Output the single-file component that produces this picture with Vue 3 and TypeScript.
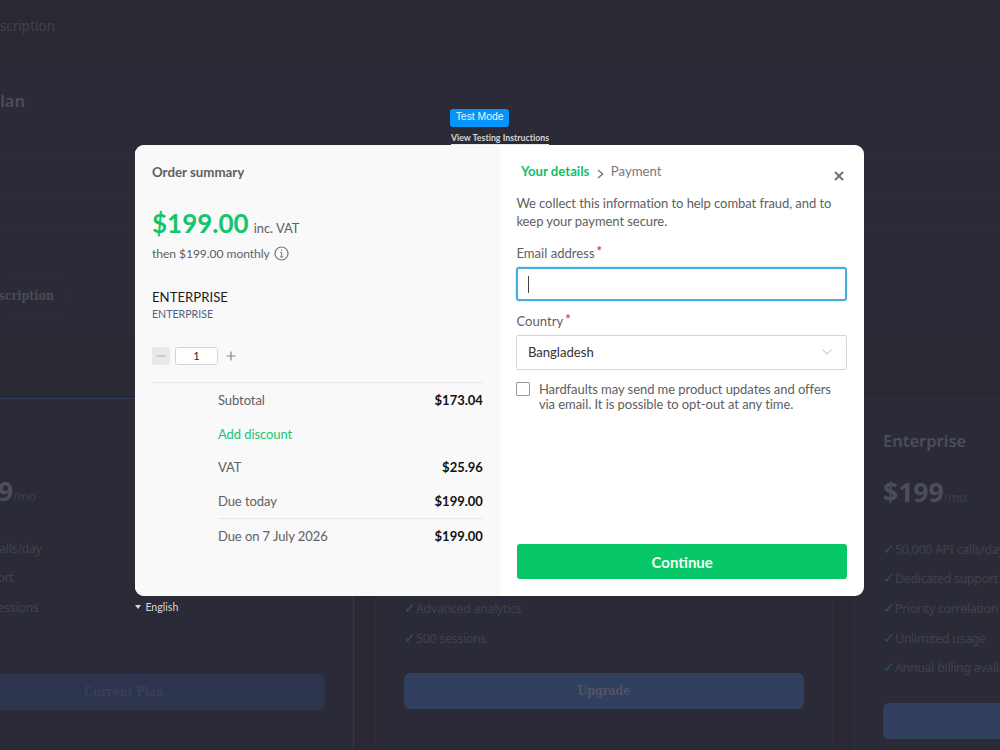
<template>
  <div class="screen">
    <div class="page" aria-hidden="true">
      <header class="topbar"><span class="crumb">Subscription</span></header>

      <section class="usage">
        <h2 class="usage-title">Your Plan</h2>
        <div class="usage-row"></div>
        <div class="usage-row"></div>
        <div class="usage-row"></div>
        <div class="manage">Subscription</div>
      </section>

      <section class="plans">
        <article v-for="plan in plans" :key="plan.id" class="plan" :class="plan.id">
          <h3 v-if="plan.name" class="plan-name">{{ plan.name }}</h3>
          <p v-if="plan.price" class="plan-price">{{ plan.price }}<small>/mo</small></p>
          <ul class="features">
            <li v-for="feature in plan.features" :key="feature"><i>✓</i><span>{{ feature }}</span></li>
          </ul>
          <div class="plan-button">{{ plan.action }}</div>
        </article>
      </section>
    </div>

    <div class="checkout">
      <div class="test-mode">
        <span class="badge">Test Mode</span>
        <a class="instructions">View Testing Instructions</a>
      </div>

      <div class="modal">
        <section class="summary">
          <h1>Order summary</h1>
          <div class="total"><strong>$199.00</strong><span>inc. VAT</span></div>
          <div class="recurring">
            then $199.00 monthly
            <svg width="15" height="15" viewBox="0 0 15 15" fill="none" stroke="#777" stroke-width="1.2">
              <circle cx="7.5" cy="7.5" r="6.5" />
              <path d="M6.3 6.4h1.4v4.4M6 10.9h3.2M7.5 3.7v1.3" stroke-width="1" />
            </svg>
          </div>
          <div class="product">ENTERPRISE</div>
          <div class="product-note">ENTERPRISE</div>
          <div class="quantity">
            <button class="step minus" :disabled="quantity <= 1" @click="quantity--">
              <svg width="10" height="10" viewBox="0 0 10 10"><path d="M0.5 5h9" /></svg>
            </button>
            <span class="count">{{ quantity }}</span>
            <button class="step plus" @click="quantity++">
              <svg width="10" height="10" viewBox="0 0 10 10"><path d="M0.5 5h9M5 0.5v9" /></svg>
            </button>
          </div>
          <div class="lines">
            <div v-for="line in lines" :key="line.label" class="line" :class="line.kind">
              <span>{{ line.label }}</span>
              <b v-if="line.amount">{{ line.amount }}</b>
            </div>
          </div>
        </section>

        <section class="details">
          <div class="steps">
            <span class="current">Your details</span>
            <svg class="next" width="7" height="10" viewBox="0 0 7 10"><path d="M1 1l4.7 4L1 9" /></svg>
            <span class="upcoming">Payment</span>
            <svg class="close" width="10" height="10" viewBox="0 0 10 10"><path d="M1 1l8 8M9 1L1 9" /></svg>
          </div>
          <p class="intro">We collect this information to help combat fraud, and to keep your payment secure.</p>
          <label class="label">Email address<sup>*</sup></label>
          <div class="email"><span class="caret"></span></div>
          <label class="label country-label">Country<sup>*</sup></label>
          <div class="select">
            <span>Bangladesh</span>
            <svg width="10" height="6" viewBox="0 0 10 6"><path d="M0.5 0.7L5 5L9.5 0.7" /></svg>
          </div>
          <div class="consent">
            <span class="box"></span>
            <p>Hardfaults may send me product updates and offers via email. It is possible to opt-out at any time.</p>
          </div>
          <button class="continue">Continue</button>
        </section>
      </div>

      <div class="language"><span class="triangle"></span>English</div>
    </div>
  </div>
</template>

<script setup lang="ts">
import { ref } from 'vue'

interface Plan {
  id: string
  name?: string
  price?: string
  features: string[]
  action?: string
}

interface Line {
  label: string
  amount?: string
  kind?: string
}

const quantity = ref(1)

const plans: Plan[] = [
  { id: 'starter', price: '9', features: ['calls/day', 'support', 'sessions'], action: 'Current Plan' },
  { id: 'pro', features: ['Advanced analytics', '500 sessions'], action: 'Upgrade' },
  {
    id: 'enterprise',
    name: 'Enterprise',
    price: '$199',
    features: ['50,000 API calls/day', 'Dedicated support', 'Priority correlation', 'Unlimited usage', 'Annual billing available'],
  },
]

const lines: Line[] = [
  { label: 'Subtotal', amount: '$173.04' },
  { label: 'Add discount', kind: 'discount' },
  { label: 'VAT', amount: '$25.96' },
  { label: 'Due today', amount: '$199.00' },
  { label: 'Due on 7 July 2026', amount: '$199.00', kind: 'later' },
]
</script>

<style>
body {
  margin: 0;
  background: #2a2833;
}
</style>

<style scoped>
* {
  box-sizing: border-box;
}

h1, h2, h3, p, ul {
  margin: 0;
  padding: 0;
}

.screen {
  position: relative;
  width: 1000px;
  height: 750px;
  overflow: hidden;
  background: #2a2833;
  font-family: Lato, sans-serif;
  font-variant-ligatures: none;
}

/* dimmed page */
.page {
  width: 1000px;
  height: 750px;
  overflow: hidden;
  font-family: "Noto Sans", sans-serif;
  color: #464653;
}

.topbar {
  height: 57px;
  padding-top: 16px;
}

.crumb {
  display: flex;
  justify-content: flex-end;
  width: 55px;
  font-size: 13.5px;
  line-height: 20px;
  color: #41414d;
}

.usage {
  height: 286px;
  padding-top: 32px;
  background: #2a2b36;
}

.usage-title {
  display: flex;
  justify-content: flex-end;
  width: 25px;
  height: 69px;
  font-size: 16.5px;
  font-weight: 600;
  line-height: 24px;
  white-space: nowrap;
  color: #4d4d59;
}

.usage-row {
  height: 35px;
  border-top: 1px solid #2c2c37;
}

.manage {
  display: flex;
  align-items: center;
  justify-content: flex-end;
  width: 72px;
  height: 37px;
  margin-top: 14px;
  padding-right: 17px;
  border: 1px solid #2c2c37;
  border-radius: 6px;
  font-family: "DejaVu Serif Condensed", "DejaVu Serif", serif;
  font-size: 12.3px;
  font-weight: 700;
  font-stretch: condensed;
  color: #4b4b57;
}

.plans {
  display: grid;
  grid-template-columns: 460px 458px 460px;
  gap: 21px;
  width: 1420px;
  height: 360px;
  margin-top: 55px;
  margin-left: -106px;
}

.plan {
  padding: 30px 28px;
  border: 1px solid #2c2d38;
  background: #2a2b36;
}

.starter {
  padding-top: 73px;
  border-color: #2c395a;
}

.pro {
  padding-top: 195px;
}

.plan-name {
  font-size: 16.5px;
  font-weight: 600;
  line-height: 24px;
  color: #4d4d59;
}

.plan-price {
  height: 38px;
  margin-top: 20px;
  font-size: 26.5px;
  font-weight: 700;
  line-height: 38px;
  color: #4d4d59;
}

.starter .plan-price {
  width: 113px;
  margin-top: 0;
  text-align: right;
}

.plan-price small {
  font-size: 12px;
  font-weight: 400;
  color: #3f3f4b;
}

.features {
  margin-top: 23.5px;
  list-style: none;
}

.pro .features {
  margin-top: 0;
}

.features li {
  display: flex;
  height: 29.7px;
  font-size: 12.4px;
  line-height: 29.7px;
  letter-spacing: -0.3px;
  white-space: nowrap;
  color: #41414d;
}

.features i {
  flex: none;
  width: 12px;
  font-family: "DejaVu Sans", sans-serif;
  font-size: 14px;
  font-style: normal;
  color: #28594d;
}

.starter .features i {
  display: none;
}

.starter .features li {
  justify-content: flex-end;
  width: 118.5px;
}

.starter .features li:nth-child(2) {
  width: 90.5px;
}

.starter .features li:nth-child(3) {
  width: 115.5px;
}

.plan-button {
  display: flex;
  align-items: center;
  justify-content: center;
  height: 36px;
  margin-top: 20px;
  border-radius: 6px;
  background: #324060;
  font-family: "DejaVu Serif Condensed", "DejaVu Serif", serif;
  font-size: 12.2px;
  font-weight: 700;
  font-stretch: condensed;
  color: #505464;
}

.starter .plan-button {
  margin-top: 51px;
  background: #2d354e;
  color: #3c4053;
}

/* checkout */
.checkout {
  position: absolute;
  top: 109px;
  left: 135.4px;
  width: 729px;
}

.test-mode {
  display: flex;
  flex-direction: column;
  align-items: flex-start;
  height: 36px;
  padding-left: 315px;
}

.badge {
  width: 58.5px;
  height: 18px;
  border-radius: 3px;
  background: #0693fb;
  font-family: "Liberation Sans", sans-serif;
  font-size: 10.4px;
  line-height: 15px;
  text-align: center;
  white-space: nowrap;
  color: #e9f5ff;
}

.instructions {
  height: 17px;
  margin: 1px 0 0 0.5px;
  border-bottom: 1px solid #e8e8ec;
  font-size: 8.8px;
  font-weight: 700;
  line-height: 19px;
  color: #d4d4da;
}

.modal {
  display: grid;
  grid-template-columns: 364.5px 364.5px;
  height: 451.4px;
  overflow: hidden;
  border-radius: 9px;
  background: #fff;
  color: #606062;
}

.summary {
  padding: 17px 17px 0 16.6px;
  background: #f9f9f9;
}

.summary h1 {
  font-size: 13.3px;
  font-weight: 700;
  line-height: 20px;
}

.total {
  display: flex;
  align-items: baseline;
  gap: 5px;
  height: 34px;
  margin-top: 24px;
  font-size: 12.9px;
  line-height: 34px;
}

.total strong {
  font-size: 26px;
  color: #13c56b;
}

.recurring {
  display: flex;
  align-items: center;
  gap: 4px;
  height: 20px;
  margin-top: 3px;
  font-size: 12.1px;
  letter-spacing: -0.06px;
}

.product {
  margin-top: 25px;
  font-size: 13.2px;
  line-height: 18px;
  color: #1c1c1e;
}

.product-note {
  font-size: 10.6px;
  line-height: 16px;
  color: #52617e;
}

.quantity {
  display: flex;
  align-items: center;
  height: 18px;
  margin-top: 25px;
}

.step {
  display: flex;
  align-items: center;
  justify-content: center;
  width: 18px;
  height: 18px;
  padding: 0;
  border: 0;
  border-radius: 3px;
  background: #fafafa;
}

.step path {
  fill: none;
  stroke: #858585;
  stroke-width: 1.2;
}

.minus {
  background: #e9e9e9;
}

.minus path {
  stroke: #b5b5b5;
}

.count {
  width: 43px;
  height: 18px;
  margin: 0 4px 0 5px;
  border: 1px solid #d5d5d5;
  border-radius: 3px;
  background: #fff;
  font-size: 11px;
  line-height: 16px;
  text-align: center;
  color: #222;
}

.lines {
  margin-top: 17px;
  padding-left: 66px;
  border-top: 1px solid #e6e6e6;
}

.line {
  display: flex;
  align-items: center;
  justify-content: space-between;
  height: 33.8px;
  font-size: 13px;
}

.line span {
  letter-spacing: -0.08px;
}

.line b {
  color: #111;
}

.discount {
  color: #20c475;
}

.later {
  height: 35px;
  border-top: 1px solid #e6e6e6;
}

.details {
  display: flex;
  flex-direction: column;
  padding: 16px 17px 17.4px 16.5px;
}

.steps {
  display: flex;
  height: 20px;
  padding-left: 4.5px;
  font-size: 13.2px;
  line-height: 20px;
}

.current {
  font-weight: 700;
  color: #13bd68;
}

.next {
  margin: 8px 7px 0 7.5px;
}

.upcoming {
  color: #7a7a7a;
}

.steps path {
  fill: none;
  stroke: #707070;
  stroke-width: 1.2;
}

.close {
  margin: 10px 3px 0 auto;
}

.steps .close path {
  stroke-width: 2;
}

.intro {
  margin-top: 14px;
  font-size: 13px;
  line-height: 17.5px;
  letter-spacing: -0.07px;
}

.label {
  display: flex;
  height: 20px;
  margin-top: 13px;
  font-size: 13.1px;
  line-height: 20px;
}

.label sup {
  margin-left: 2px;
  font-size: 13px;
  font-weight: 700;
  line-height: 16px;
  color: #d4405c;
}

.email {
  display: flex;
  align-items: center;
  height: 34px;
  margin-top: 4px;
  padding-left: 10px;
  border: 2px solid #45aee0;
  border-radius: 3px;
  box-shadow: 0 0 2px #86d2f5;
}

.caret {
  width: 1px;
  height: 17px;
  background: #444;
}

.country-label {
  margin-top: 10px;
}

.select {
  display: flex;
  align-items: center;
  justify-content: space-between;
  height: 35px;
  margin-top: 4px;
  padding: 0 14px 1px 10.5px;
  border: 1px solid #d6d6d6;
  border-radius: 2px;
  font-size: 13.1px;
  color: #333336;
}

.select path {
  fill: none;
  stroke: #b5b5b5;
}

.consent {
  display: flex;
  gap: 8.5px;
  margin-top: 12px;
  font-size: 13px;
  line-height: 15px;
}

.consent p {
  letter-spacing: -0.06px;
}

.box {
  flex: none;
  width: 14px;
  height: 14px;
  border: 1px solid #999;
  border-radius: 1px;
}

.continue {
  height: 35px;
  margin: auto 0 0 0.6px;
  border: 0;
  border-radius: 3px;
  background: #08c768;
  font-family: Lato, sans-serif;
  font-size: 15px;
  font-weight: 700;
  color: #effff6;
}

.language {
  display: flex;
  align-items: center;
  gap: 4px;
  height: 21px;
  font-size: 10.6px;
  color: #d6d6dc;
}

.triangle {
  border: 3.5px solid transparent;
  border-top: 4px solid #d6d6dc;
  border-bottom: 0;
}
</style>
